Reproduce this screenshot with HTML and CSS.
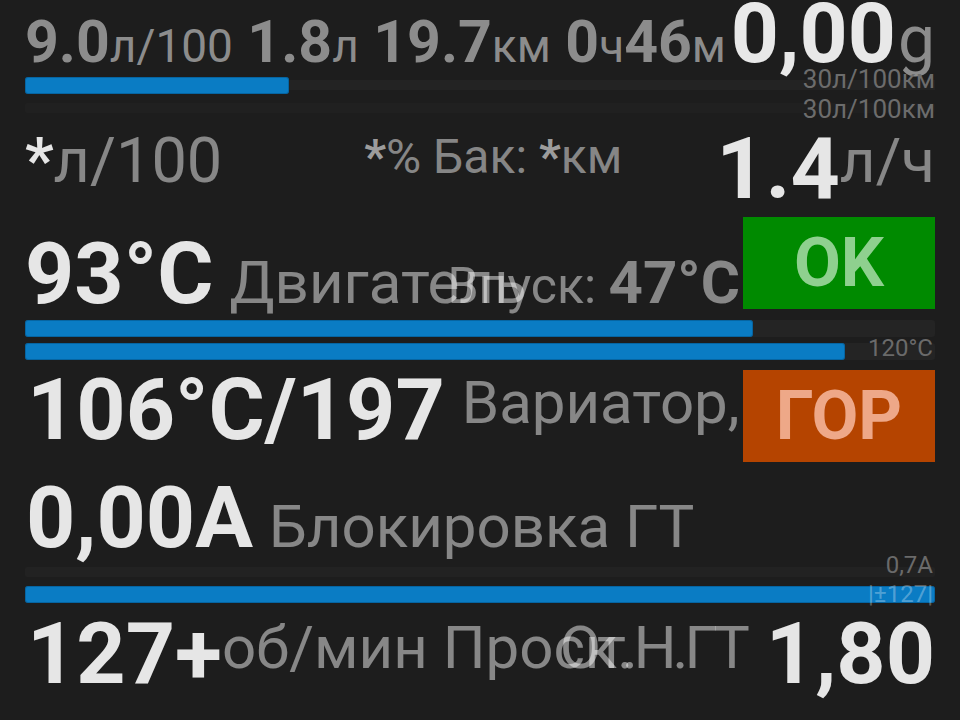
FILE: index.html
```html
<!DOCTYPE html>
<html lang="ru">
<head>
<meta charset="utf-8">
<title>Dashboard</title>
<link rel="stylesheet" href="styles.css">
</head>
<body>
<div class="screen">
  <div class="r1">
    <div class="trip"><b>9.0</b>л/100 <b>1.8</b>л <b>19.7</b>км <b>0</b>ч<b>46</b>м</div>
    <div class="gforce"><span class="gval">0,00</span><span class="gunit">g</span></div>
  </div>

  <div class="meter m1">
    <div class="tracks">
      <div class="track t1"><div class="fill" style="width:264px"></div></div>
      <div class="track t2"></div>
    </div>
    <div class="notes"><span>30л/100км</span><span>30л/100км</span></div>
  </div>

  <div class="r2">
    <div class="avg"><span class="star">*</span><span class="dim">л/100</span></div>
    <div class="tank dim"><b class="st">*</b>% Бак: <b class="st">*</b>км</div>
    <div class="rate">
      <span class="big hi">1.4</span><span class="unit dim">л/ч</span>
    </div>
  </div>

  <div class="r3">
    <div class="stack">
      <div class="line"><span class="val hi">93°C</span><span class="lbl dim">Двигатель</span></div>
      <div class="line intake"><span class="lbl2 dim">Впуск: </span><span class="v2 dim">47°C</span></div>
    </div>
    <div class="status ok">OK</div>
  </div>

  <div class="m2">
    <div class="bar"><div class="fill" style="width:728px"></div></div>
    <div class="meter m3">
      <div class="bar"><div class="fill" style="width:820px"></div></div>
      <span class="tick">120°C</span>
    </div>
  </div>

  <div class="r4">
    <div class="stack">
      <div class="line"><span class="val hi v4">106°C/197</span><span class="lbl dim l4">Вариатор,</span></div>
    </div>
    <div class="status hot">ГОР</div>
  </div>

  <div class="r5">
    <span class="val hi">0,00A</span><span class="lbl dim">Блокировка ГТ</span>
  </div>

  <div class="m4">
    <div class="meter m4a">
      <div class="track t4"></div>
      <span class="tick">0,7A</span>
    </div>
    <div class="meter m4b">
      <div class="bar"><div class="fill" style="width:100%"></div></div>
      <span class="over">|±127|</span>
    </div>
  </div>

  <div class="r6">
    <span class="val hi">127+</span>
    <div class="labels">
      <span class="la dim">об/мин Проск.</span>
      <span class="lb dim">От.Н.ГТ</span>
    </div>
    <span class="val hi">1,80</span>
  </div>
</div>
</body>
</html>
```

FILE: styles.css
```css
* { box-sizing: border-box; }
html, body { margin: 0; padding: 0; background: #1d1d1d; }
body {
  width: 960px;
  height: 720px;
  overflow: hidden;
  font-family: Roboto, "Noto Sans", "DejaVu Sans", sans-serif;
}
.screen { padding: 2px 25px 0; line-height: 1; white-space: nowrap; }

.hi { color: #e6e6e6; font-weight: 700; }
.dim { color: rgba(255, 255, 255, 0.47); }

/* row 1 */
.r1 { display: flex; align-items: baseline; height: 62px; }
.trip { font-size: 46px; color: #8c8c8c; word-spacing: 3px; }
.trip b { font-size: 59px; font-weight: 700; }
.gforce { margin-left: auto; display: flex; align-items: baseline; }
.gval { font-size: 84px; line-height: 0.75; font-weight: 700; color: #e8e8e8; }
.gunit { font-size: 66px; color: #8c8c8c; margin-left: 2px; }

/* stacked meters */
.meter { display: grid; }
.meter > * { grid-area: 1 / 1; }

.m1 { height: 60px; }
.m1 .tracks { padding-top: 13px; display: flex; flex-direction: column; gap: 9px; }
.track { height: 17px; border-radius: 2px; }
.t1 { background: linear-gradient(transparent 3px, #232323 3px, #232323 13px, transparent 13px); }
.t2 { height: 10px; background: #202020; }
.fill { height: 100%; background: #0a7cc4; border-radius: 3px; box-shadow: inset 0 0 0 1px rgba(0, 60, 100, 0.35); }
.notes {
  justify-self: end;
  display: flex;
  flex-direction: column;
  align-items: flex-end;
  font-size: 26px;
  line-height: 30px;
  color: #6c6c6c;
}

/* row 2 */
.r2 { display: flex; align-items: flex-start; height: 93px; }
.avg { font-size: 63px; padding-top: 5px; }
.star { font-weight: 700; color: #e6e6e6; }
.tank { font-size: 48px; padding-top: 9px; margin-left: 142px; }
.tank .st { font-weight: 700; color: rgba(255, 255, 255, 0.58); }
.rate { margin-left: auto; display: flex; align-items: flex-start; }
.rate .big { font-size: 86px; padding-top: 2px; }
.rate .unit { font-size: 62px; padding-top: 6px; }

/* rows with status box */
.r3, .r4 { display: flex; align-items: flex-start; }
.r3 { height: 93px; }
.r4 { height: 92px; }
.stack { flex: 1; min-width: 0; display: grid; align-items: baseline; padding-top: 14px; }
.stack > * { grid-area: 1 / 1; }
.line { display: flex; align-items: baseline; }
.val { font-size: 86px; }
.lbl { font-size: 60px; margin-left: 16px; }
.intake { justify-self: end; margin-right: 3px; }
.lbl2 { font-size: 50px; white-space: pre; }
.v2 { font-size: 60px; font-weight: 700; }

.r4 .stack { display: block; padding-top: 0; }
.r4 .line { align-items: flex-start; }
.v4 { margin-top: -3px; margin-left: 2px; }
.l4 { margin-left: 17px; padding-top: 3px; }

.status {
  width: 192px;
  height: 92px;
  flex: none;
  display: flex;
  align-items: center;
  justify-content: center;
  font-size: 68px;
  font-weight: 700;
}
.ok { background: #008a00; color: #8fd08f; }
.hot { background: #b54400; color: #eea888; }

/* bars 2 and 3 */
.m2 { height: 60px; padding-top: 10px; display: flex; flex-direction: column; gap: 6px; }
.bar { height: 17px; background: #242424; border-radius: 3px; }
.m3 { grid-template-rows: 17px; }
.tick {
  justify-self: end;
  align-self: end;
  font-size: 24px;
  line-height: 24px;
  color: #6a6a6a;
  margin-right: 2px;
}

/* row 5 */
.r5 { display: flex; align-items: baseline; padding-top: 13px; height: 95px; }
.r5 .val { margin-left: 1px; }

/* bar 4 */
.m4 { height: 53px; }
.m4a { grid-template-rows: 20px; }
.t4 { align-self: end; height: 10px; background: #222222; }
.m4b { margin-top: 9px; grid-template-rows: 17px; }
.over {
  justify-self: end;
  font-size: 24px;
  line-height: 17px;
  color: rgba(255, 255, 255, 0.3);
  margin-right: 2px;
}

/* row 6 */
.r6 { display: flex; align-items: flex-start; }
.r6 .val { padding-top: 1px; }
.r6 .val:first-child { margin-left: 2px; }
.labels { flex: 1; display: grid; padding-top: 8px; }
.labels > * { grid-area: 1 / 1; font-size: 60px; }
.la { justify-self: start; }
.lb { justify-self: end; margin-right: 20px; letter-spacing: -4px; }
```
